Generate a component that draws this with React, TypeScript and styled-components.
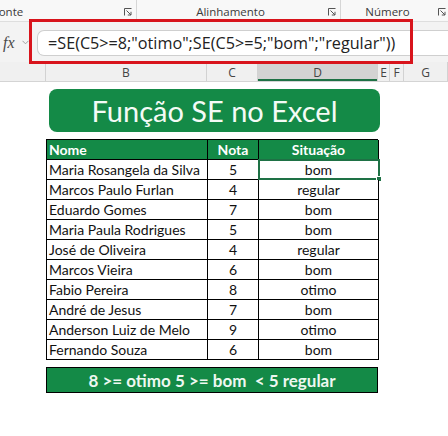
import React from "react";
import styled, { createGlobalStyle } from "styled-components";

const GlobalStyle = createGlobalStyle`
  html, body { margin: 0; padding: 0; background: #ffffff; }
  body { width: 448px; height: 436px; overflow: hidden; }
  * { box-sizing: border-box; }
`;

const GREEN = "#148a47";
const BODY_FONT = `Lato, "Open Sans", sans-serif`;

const Page = styled.div`
  position: relative;
  width: 448px;
  height: 436px;
  overflow: hidden;
  background: #fff;
`;

const Ribbon = styled.div`
  display: flex;
  height: 22px;
  background: #f8f8f8;
  border-bottom: 1px solid #dedede;
  overflow: hidden;
`;

const RibbonGroup = styled.div<{ $w: number; $shift?: number; $sep?: boolean }>`
  flex: 0 0 ${(p) => p.$w}px;
  margin-left: ${(p) => p.$shift ?? 0}px;
  display: flex;
  align-items: center;
  position: relative;
  padding-right: 4px;
  border-right: ${(p) => (p.$sep ? "1px solid #d6d6d6" : "none")};
  font-family: "Open Sans", sans-serif;
  font-size: 11.5px;
  color: #3b3b3b;
`;

const GroupLabel = styled.span<{ $pad?: number }>`
  flex: 1;
  text-align: center;
  padding-right: ${(p) => p.$pad ?? 0}px;
  line-height: 1;
  padding-top: 2px;
`;

const Launcher = styled.svg`
  flex: 0 0 8px;
  width: 8px;
  height: 8px;
  margin-top: 3px;
`;

const FormulaBar = styled.div`
  display: flex;
  align-items: center;
  height: 40px;
  background: #f3f3f3;
  padding-top: 1px;
`;

const FxArea = styled.div`
  flex: 0 0 37px;
  display: flex;
  align-items: center;
  padding-left: 3px;
  gap: 7px;
`;

const Fx = styled.span`
  font-family: "Liberation Serif", serif;
  font-style: italic;
  font-size: 16px;
  color: #4a4a4a;
`;

const FormulaInput = styled.div`
  flex: 1;
  height: 26px;
  background: #fff;
  border: 1px solid #cfcfcf;
  border-right: none;
  border-radius: 7px 0 0 7px;
  display: flex;
  align-items: center;
  padding-left: 10px;
  font-family: "Open Sans", sans-serif;
  font-size: 16.2px;
  color: #222;
  white-space: nowrap;
`;

const ColumnHeaders = styled.div`
  display: grid;
  grid-template-columns: 46px 161px 51px 120px 12px 14px 1fr;
  height: 20px;
  background: #f0f0f0;
  border-bottom: 1px solid #d4d4d4;
`;

const ColHead = styled.div<{ $sel?: boolean }>`
  display: flex;
  align-items: center;
  justify-content: center;
  border-right: 1px solid #d2d2d2;
  font-family: "Open Sans", sans-serif;
  font-size: 12px;
  color: #444;
  background: ${(p) => (p.$sel ? "#d3d3d3" : "transparent")};
  box-shadow: ${(p) => (p.$sel ? "inset 0 -2px 0 #1e7145" : "none")};
  padding-top: 1px;
`;

const Sheet = styled.div`
  display: flex;
  flex-direction: column;
  padding-top: 7px;
`;

const TitleBanner = styled.div`
  margin-left: 49px;
  width: 331px;
  height: 43px;
  border-radius: 8px;
  background: ${GREEN};
  color: #f4fbf6;
  display: flex;
  align-items: center;
  justify-content: center;
  font-family: ${BODY_FONT};
  font-size: 29px;
  padding-bottom: 1px;
`;

const Table = styled.div`
  margin-top: 7px;
  margin-left: 46px;
  width: 332px;
  display: grid;
  grid-template-columns: 161px 51px 120px;
  border-top: 1px solid #000;
  border-left: 1px solid #000;
`;

const Cell = styled.div<{ $head?: boolean; $align?: "left" | "center" }>`
  position: relative;
  height: 20px;
  border-right: 1px solid #000;
  border-bottom: 1px solid #000;
  background: ${(p) => (p.$head ? GREEN : "#fff")};
  color: ${(p) => (p.$head ? "#fff" : "#111")};
  font-family: ${BODY_FONT};
  font-weight: ${(p) => (p.$head ? 700 : 400)};
  font-size: 14px;
  line-height: 19px;
  text-align: ${(p) => p.$align ?? "left"};
  padding-left: ${(p) => (p.$align === "center" ? 0 : 2)}px;
  white-space: nowrap;
  overflow: visible;
`;

const Selection = styled.div`
  position: absolute;
  left: -1px;
  top: -1px;
  right: -2px;
  bottom: -1px;
  border: 2px solid #1e7145;
  pointer-events: none;
`;

const FillHandle = styled.div`
  position: absolute;
  right: -4px;
  bottom: -4px;
  width: 6px;
  height: 6px;
  background: #1e7145;
  border: 1px solid #fff;
`;

const Legend = styled.div`
  margin-top: 7px;
  margin-left: 46px;
  width: 332px;
  height: 26px;
  background: ${GREEN};
  border: 1px solid #000;
  color: #eef8f1;
  display: flex;
  align-items: center;
  justify-content: center;
  font-family: ${BODY_FONT};
  font-weight: 700;
  font-size: 17px;
  white-space: pre;
`;

const RedFrame = styled.div`
  position: absolute;
  left: 29px;
  top: 19px;
  width: 384px;
  height: 45px;
  border: 3px solid #d8141c;
  pointer-events: none;
`;

const LauncherIcon = () => (
  <Launcher viewBox="0 0 8 8">
    <path d="M0.5 7.5 V0.5 H7.5" fill="none" stroke="#555" strokeWidth="1" />
    <path d="M2.5 2.5 L7 7 M7 3.8 V7 H3.8" fill="none" stroke="#555" strokeWidth="1" />
  </Launcher>
);

const rows: [string, number, string][] = [
  ["Maria Rosangela da Silva", 5, "bom"],
  ["Marcos Paulo Furlan", 4, "regular"],
  ["Eduardo Gomes", 7, "bom"],
  ["Maria Paula Rodrigues", 5, "bom"],
  ["José de Oliveira", 4, "regular"],
  ["Marcos Vieira", 6, "bom"],
  ["Fabio Pereira", 8, "otimo"],
  ["André de Jesus", 7, "bom"],
  ["Anderson Luiz de Melo", 9, "otimo"],
  ["Fernando Souza", 6, "bom"],
];

export default function App() {
  return (
    <Page>
      <GlobalStyle />
      <Ribbon>
        <RibbonGroup $w={245} $shift={-108} $sep>
          <GroupLabel>Fonte</GroupLabel>
          <LauncherIcon />
        </RibbonGroup>
        <RibbonGroup $w={204} $sep>
          <GroupLabel $pad={4}>Alinhamento</GroupLabel>
          <LauncherIcon />
        </RibbonGroup>
        <RibbonGroup $w={109}>
          <GroupLabel $pad={4}>Número</GroupLabel>
          <LauncherIcon />
        </RibbonGroup>
      </Ribbon>
      <FormulaBar>
        <FxArea>
          <Fx>fx</Fx>
          <svg width="7" height="5" viewBox="0 0 7 5">
            <path d="M0.5 0.8 L3.5 3.8 L6.5 0.8" fill="none" stroke="#a0a0a0" strokeWidth="1" />
          </svg>
        </FxArea>
        <FormulaInput>=SE(C5&gt;=8;"otimo";SE(C5&gt;=5;"bom";"regular"))</FormulaInput>
      </FormulaBar>
      <ColumnHeaders>
        <ColHead />
        <ColHead>B</ColHead>
        <ColHead>C</ColHead>
        <ColHead $sel>D</ColHead>
        <ColHead>E</ColHead>
        <ColHead>F</ColHead>
        <ColHead>G</ColHead>
      </ColumnHeaders>
      <Sheet>
        <TitleBanner>Função SE no Excel</TitleBanner>
        <Table>
          <Cell $head>Nome</Cell>
          <Cell $head $align="center">Nota</Cell>
          <Cell $head $align="center">Situação</Cell>
          {rows.map(([name, nota, sit], i) => (
            <React.Fragment key={name}>
              <Cell>{name}</Cell>
              <Cell $align="center">{nota}</Cell>
              <Cell $align="center">
                {sit}
                {i === 0 && (
                  <Selection>
                    <FillHandle />
                  </Selection>
                )}
              </Cell>
            </React.Fragment>
          ))}
        </Table>
        <Legend>{"8 >= otimo 5 >= bom  < 5 regular"}</Legend>
      </Sheet>
      <RedFrame />
    </Page>
  );
}
